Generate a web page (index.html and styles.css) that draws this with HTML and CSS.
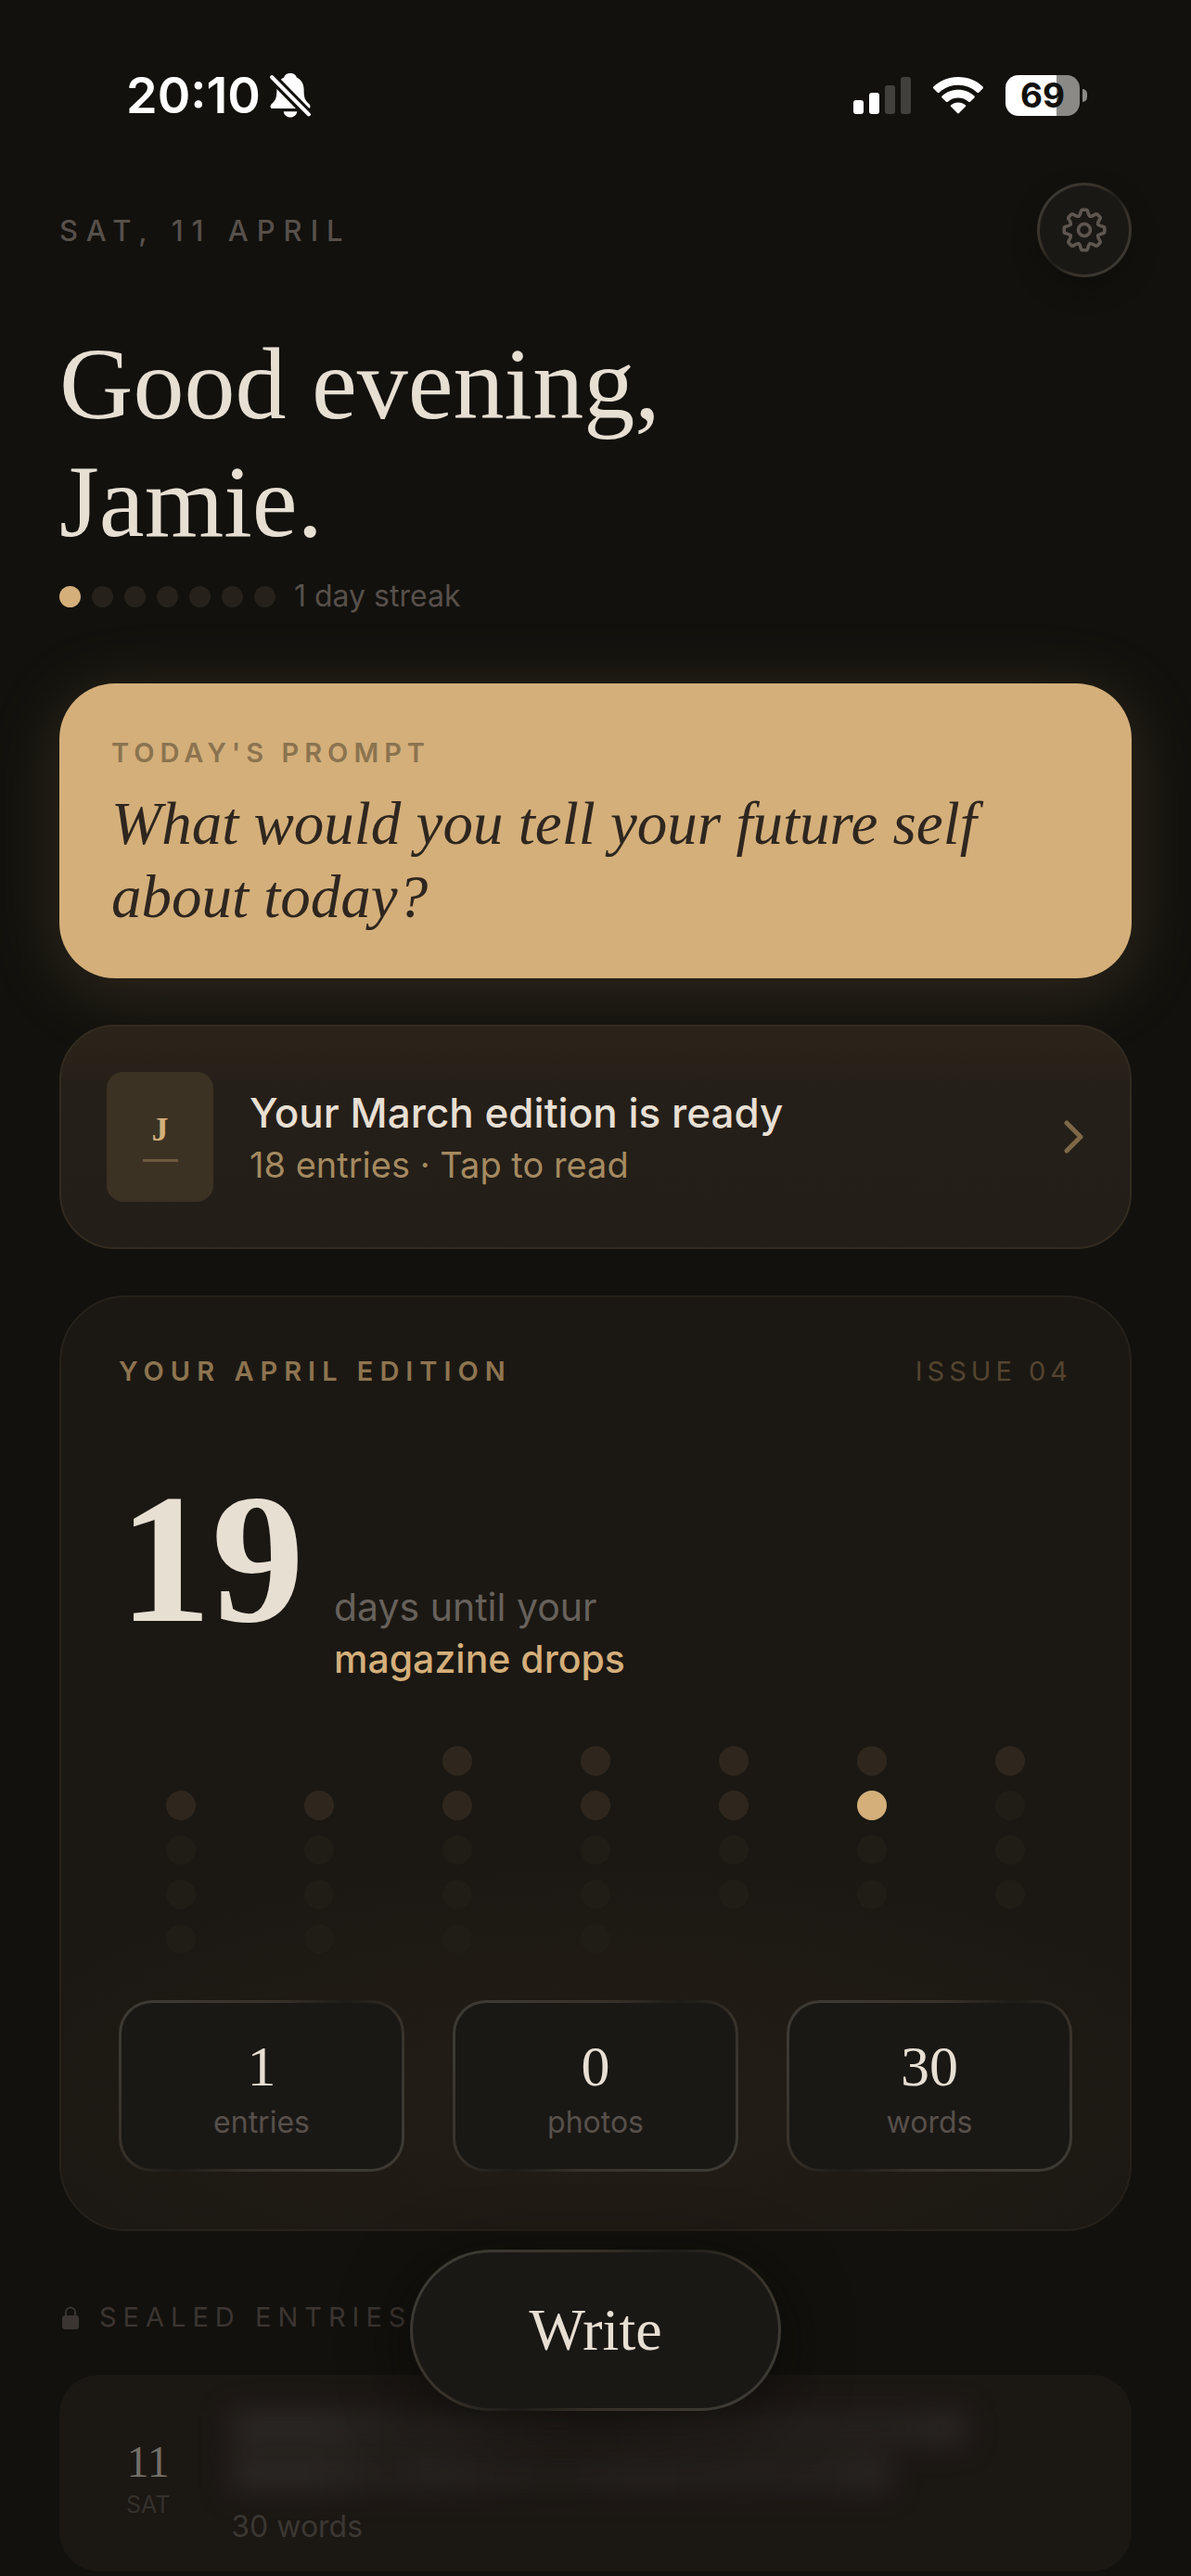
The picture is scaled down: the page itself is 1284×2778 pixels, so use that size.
FILE: index.html
```html
<!DOCTYPE html>
<html lang="en">
<head>
<meta charset="utf-8">
<meta name="viewport" content="width=device-width, initial-scale=1">
<title>Journal</title>
<link rel="stylesheet" href="styles.css">
</head>
<body>
<div class="status">
  <div class="status-left">
    <span class="clock">20:10</span>
    <svg class="bell" viewBox="0 0 42 46" aria-hidden="true">
      <path fill="#fff" d="M21 0c3.500 0 6 1.800 6.500 4.200C32.500 6.500 35 11 35 17c0 9 1.500 11 5 14.500 2.500 2.500 2 5-1 5H3c-3 0-3.500-2.500-1-5C5.500 28 7 26 7 17c0-6 2.500-10.500 7.500-12.800C15 1.800 17.500 0 21 0zM14 39.500h14c-.6 3.800-3.400 6-7 6s-6.400-2.200-7-6z"/>
      <path stroke="#12110d" stroke-width="10" d="M-3 -1 45 48"/>
      <path stroke="#fff" stroke-width="4" stroke-linecap="round" d="M2 4 40 42.500"/>
    </svg>
  </div>
  <div class="status-right">
    <svg class="signal" viewBox="0 0 62 40" aria-hidden="true">
      <g fill="#fff"><rect y="25" width="11" height="15" rx="3"/><rect x="17" y="17" width="11" height="23" rx="3"/></g>
      <g fill="#41403d"><rect x="34" y="9" width="11" height="31" rx="3"/><rect x="51" width="11" height="40" rx="3"/></g>
    </svg>
    <svg class="wifi" viewBox="0 0 54 40" aria-hidden="true">
      <path fill="#fff" d="M27 0C37.500 0 47 4 53.600 10.500c.6.600.6 1.300 0 1.900l-4.300 4.300c-.6.600-1.300.600-1.900 0C42 11.500 34.800 8.700 27 8.700S12 11.500 6.600 16.700c-.6.600-1.300.600-1.900 0L.4 12.400c-.6-.6-.6-1.300 0-1.900C7 4 16.500 0 27 0zM27 13.800c6.700 0 12.800 2.500 17.400 6.700.6.600.6 1.300 0 1.900l-4.400 4.300c-.6.500-1.200.500-1.800 0-3-2.600-6.900-4.200-11.200-4.200s-8.200 1.600-11.200 4.200c-.6.500-1.200.500-1.800 0l-4.400-4.300c-.6-.6-.6-1.300 0-1.900 4.600-4.200 10.700-6.700 17.400-6.700zM27 27.400c3 0 5.700 1.100 7.800 2.900.6.500.6 1.200 0 1.800l-6.900 7c-.6.600-1.200.600-1.800 0l-6.900-7c-.6-.6-.6-1.300 0-1.800 2.100-1.800 4.800-2.900 7.800-2.900z"/>
    </svg>
    <div class="battery"><span class="battery-level">69</span><i class="battery-cap"></i></div>
  </div>
</div>

<main class="page">
  <header class="topbar">
    <p class="date">SAT, 11 APRIL</p>
    <button class="settings" type="button" aria-label="Settings">
      <svg viewBox="0 0 48 48" aria-hidden="true" fill="none" stroke="#5e5650" stroke-width="3.600" stroke-linecap="round" stroke-linejoin="round">
        <defs><path id="tooth" d="M17.900 9.200C19.300 8.600 19.600 7.500 20.300 4.200Q20.700 2.200 22.300 2.200H25.700Q27.300 2.200 27.700 4.200C28.400 7.500 28.700 8.600 30.100 9.200"/></defs>
        <use href="#tooth"/>
        <use href="#tooth" transform="rotate(45 24 24)"/>
        <use href="#tooth" transform="rotate(90 24 24)"/>
        <use href="#tooth" transform="rotate(135 24 24)"/>
        <use href="#tooth" transform="rotate(180 24 24)"/>
        <use href="#tooth" transform="rotate(225 24 24)"/>
        <use href="#tooth" transform="rotate(270 24 24)"/>
        <use href="#tooth" transform="rotate(315 24 24)"/>
        <circle cx="24" cy="24" r="6.500"/>
      </svg>
    </button>
  </header>

  <h1 class="greeting">Good evening,<br>Jamie.</h1>

  <div class="streak">
    <i class="bead bead-on"></i><i class="bead"></i><i class="bead"></i><i class="bead"></i><i class="bead"></i><i class="bead"></i><i class="bead"></i>
    <span class="streak-text">1 day streak</span>
  </div>

  <section class="prompt">
    <h2 class="prompt-label">TODAY'S PROMPT</h2>
    <p class="prompt-text">What would you tell your future self about today?</p>
  </section>

  <a class="edition" href="#march">
    <span class="cover"><b class="cover-letter">J</b><i class="cover-rule"></i></span>
    <span class="edition-body">
      <span class="edition-title">Your March edition is ready</span>
      <span class="edition-sub">18 entries · Tap to read</span>
    </span>
    <svg class="chevron" viewBox="0 0 22 36" aria-hidden="true" fill="none" stroke="#7f6847" stroke-width="5" stroke-linecap="round" stroke-linejoin="round"><path d="M3 3 18 18 3 33"/></svg>
  </a>

  <section class="issue">
    <div class="issue-head">
      <h2 class="issue-title">YOUR APRIL EDITION</h2>
      <span class="issue-no">ISSUE 04</span>
    </div>
    <div class="countdown">
      <span class="count">19</span>
      <p class="count-text">days until your<br><strong>magazine drops</strong></p>
    </div>
    <div class="month" aria-hidden="true">
      <i class="day past first"></i><i class="day past"></i><i class="day past"></i><i class="day past"></i><i class="day past"></i>
      <i class="day past"></i><i class="day past"></i><i class="day past"></i><i class="day past"></i><i class="day past"></i><i class="day today"></i><i class="day"></i>
      <i class="day"></i><i class="day"></i><i class="day"></i><i class="day"></i><i class="day"></i><i class="day"></i><i class="day"></i>
      <i class="day"></i><i class="day"></i><i class="day"></i><i class="day"></i><i class="day"></i><i class="day"></i><i class="day"></i>
      <i class="day"></i><i class="day"></i><i class="day"></i><i class="day"></i>
    </div>
    <div class="stats">
      <div class="stat"><span class="stat-value">1</span><span class="stat-label">entries</span></div>
      <div class="stat"><span class="stat-value">0</span><span class="stat-label">photos</span></div>
      <div class="stat"><span class="stat-value">30</span><span class="stat-label">words</span></div>
    </div>
  </section>

  <section>
    <h2 class="sealed-title">
      <svg class="lock" viewBox="0 0 18 25" aria-hidden="true"><path fill="none" stroke="#3b3531" stroke-width="2" d="M4 12V6.500a5 5 0 0 1 10 0V12"/><rect y="10" width="18" height="15" rx="3" fill="#3b3531"/></svg>
      SEALED ENTRIES
    </h2>
    <article class="sealed">
      <div class="sealed-date"><span class="sealed-day">11</span><span class="sealed-week">SAT</span></div>
      <div class="sealed-body">
        <div class="veil" aria-hidden="true"><i class="veil-line"></i><i class="veil-line veil-short"></i></div>
        <p class="sealed-words">30 words</p>
      </div>
    </article>
  </section>
</main>

<button class="write" type="button">Write</button>
</body>
</html>
```

FILE: styles.css
```css
:root {
  --bg: #12110d;
  --cream: #e8dfd3;
  --gold: #d4af7a;
  --dim: #57504b;
  --sans: Inter, "Liberation Sans", sans-serif;
  --serif: "Liberation Serif", serif;
}

* { box-sizing: border-box; }

body {
  margin: 0;
  background: var(--bg);
  color: var(--cream);
  font-family: var(--sans);
}

h1, h2, p { margin: 0; font-weight: 400; }
i { font-style: normal; }
button { font: inherit; color: inherit; padding: 0; cursor: pointer; }

/* Status bar */
.status {
  display: flex;
  justify-content: space-between;
  align-items: center;
  padding: 73px 112px 64px 136px;
  color: #fff;
}
.status-left { display: flex; align-items: center; gap: 10px; }
.clock { font-size: 54px; line-height: 60px; font-weight: 600; }
.bell { width: 44px; height: 48px; }
.status-right { display: flex; align-items: center; gap: 24px; }
.signal { width: 62px; height: 40px; }
.wifi { width: 54px; height: 40px; }
.battery { display: flex; align-items: center; gap: 3px; }
.battery-level {
  width: 80px;
  border-radius: 14px;
  background: linear-gradient(90deg, #fff 69%, #8a8986 69%);
  color: var(--bg);
  font-size: 37px;
  line-height: 44px;
  font-weight: 700;
  text-align: center;
}
.battery-cap { width: 5px; height: 14px; border-radius: 0 5px 5px 0; background: #8a8986; }

.page { padding: 0 64px 4px; }

/* Greeting */
.topbar { display: flex; justify-content: space-between; align-items: center; }
.date { font-size: 31px; font-weight: 500; letter-spacing: 9px; color: var(--dim); }
.settings, .stat, .write {
  border: 3px solid transparent;
  background:
    linear-gradient(#1a1815, #1a1815) padding-box,
    linear-gradient(135deg, #3d3a34 10%, #373129 35%, #1e1c18 50%, #373129 65%, #3d3a34 90%) border-box;
}
.settings {
  display: grid;
  place-items: center;
  width: 102px;
  height: 102px;
  border-radius: 51px;
  box-shadow: 0 12px 24px #0f0e0b;
}
.settings svg { width: 48px; height: 48px; }
.greeting {
  margin-top: 52px;
  font-family: var(--serif);
  font-size: 110px;
  line-height: 127px;
}
.streak { display: flex; align-items: center; gap: 12px; margin-top: 18px; }
.bead { width: 23px; height: 23px; border-radius: 50%; background: #26211a; }
.bead-on { background: var(--gold); }
.streak-text { margin-left: 8px; font-size: 32px; line-height: 40px; color: var(--dim); }

/* Prompt */
.prompt {
  margin-top: 74px;
  padding: 55px 56px 48px;
  border-radius: 60px;
  background: var(--gold);
  box-shadow: 0 12px 80px rgba(212, 175, 122, 0.17);
  color: #2e261f;
}
.prompt-label { font-size: 29px; line-height: 40px; font-weight: 600; letter-spacing: 6px; color: #8b734f; }
.prompt-text { margin-top: 17px; font-family: var(--serif); font-size: 65px; line-height: 79px; font-style: italic; }

/* Finished edition */
.edition {
  display: flex;
  align-items: center;
  gap: 39px;
  margin-top: 50px;
  padding: 49px;
  border: 2px solid #332b20;
  border-radius: 60px;
  background: linear-gradient(#2b241a, #241f18 30%, #231e18);
  color: inherit;
  text-decoration: none;
}
.cover {
  display: flex;
  flex-direction: column;
  align-items: center;
  justify-content: center;
  gap: 14px;
  width: 115px;
  height: 140px;
  border-radius: 18px;
  background: #3c3224;
}
.cover-letter { font-family: var(--serif); font-size: 36px; line-height: 36px; color: var(--gold); }
.cover-rule { width: 38px; height: 3px; background: #6e5840; }
.edition-body { display: flex; flex: 1; flex-direction: column; }
.edition-title { font-size: 44px; line-height: 60px; font-weight: 500; }
.edition-sub { font-size: 38px; line-height: 52px; color: #a58a60; }
.chevron { width: 22px; height: 36px; }

/* Current edition */
.issue {
  margin-top: 50px;
  padding: 60px 62px 62px;
  border: 2px solid #26211a;
  border-radius: 72px;
  background:
    radial-gradient(ellipse 62% 26% at 50% 86%, #231d16, transparent),
    #1b1813;
}
.issue-head { display: flex; justify-content: space-between; line-height: 40px; }
.issue-title { font-size: 29px; font-weight: 600; letter-spacing: 7px; color: #8e7450; }
.issue-no { font-size: 29px; letter-spacing: 5px; color: #54442f; }
.countdown { display: flex; align-items: baseline; gap: 32px; margin-top: 70px; }
.count { font-family: var(--serif); font-size: 200px; line-height: 224px; font-weight: 700; }
.count-text { font-size: 41px; line-height: 56px; color: #67615b; }
.count-text strong { font-weight: 500; color: var(--gold); }
.month { display: grid; grid-template-columns: repeat(7, 1fr); gap: 16px 15px; justify-items: center; margin-top: 66px; }
.day { width: 32px; height: 32px; border-radius: 50%; background: #201c16; }
.past { background: #2f271d; }
.today { background: var(--gold); }
.first { grid-column: 3; }
.stats { display: grid; grid-template-columns: repeat(3, 1fr); gap: 52px; margin-top: 50px; }
.stat { display: flex; flex-direction: column; align-items: center; padding: 32px 0 25px; border-radius: 36px; }
.stat-value { font-family: var(--serif); font-size: 62px; line-height: 72px; }
.stat-label { font-size: 32px; line-height: 50px; color: var(--dim); }

/* Sealed entries */
.sealed-title {
  display: flex;
  align-items: center;
  gap: 22px;
  margin-top: 73px;
  padding-left: 3px;
  font-size: 29px;
  line-height: 40px;
  letter-spacing: 7px;
  color: #3b3531;
}
.lock { width: 18px; height: 25px; }
.sealed { display: flex; gap: 66px; margin-top: 42px; padding: 40px 72px 28px; border-radius: 42px; background: #1b1713; }
.sealed-date { display: flex; flex-direction: column; align-items: center; gap: 2px; padding-top: 26px; }
.sealed-day { font-family: var(--serif); font-size: 48px; line-height: 56px; color: #736e67; }
.sealed-week { font-size: 25px; line-height: 32px; color: #35312d; }
.sealed-body { flex: 1; }
.veil { display: grid; gap: 12px; filter: blur(15px); }
.veil-line { width: 88%; height: 36px; background: linear-gradient(90deg, #2c2825 12%, #24201c 24%, #292522 30%, #221e1a 50%, #272320 60%, #25211e 90%, #2c2825); }
.veil-short { width: 79%; }
.sealed-words { margin-top: 20px; font-size: 32px; line-height: 40px; color: #3b3733; }

/* Floating action */
.write {
  position: fixed;
  left: 50%;
  bottom: 178px;
  width: 400px;
  height: 174px;
  margin-left: -200px;
  border-radius: 87px;
  box-shadow: 0 16px 72px rgba(8, 7, 5, 0.6);
  font-family: var(--serif);
  font-size: 64px;
}
```
